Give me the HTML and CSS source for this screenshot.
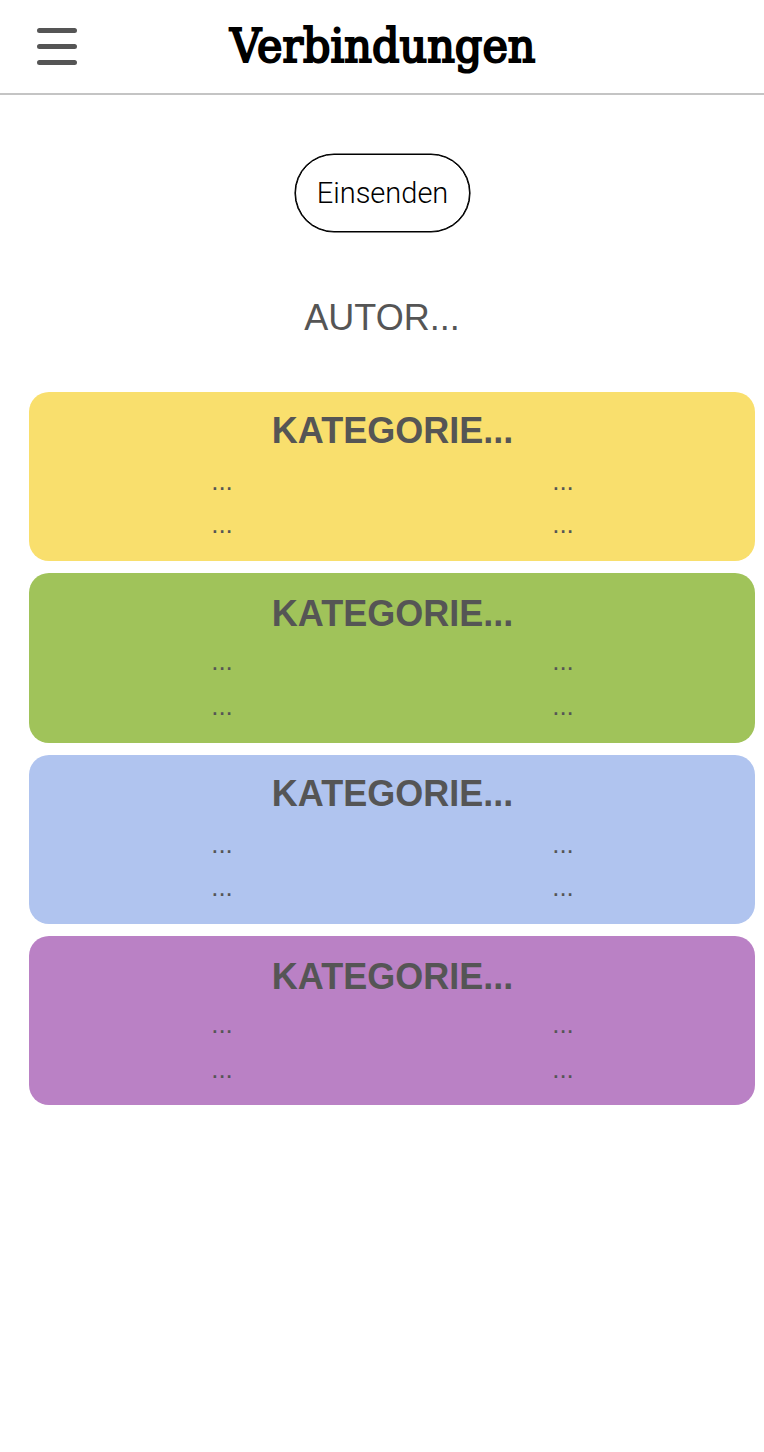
FILE: index.html
```html
<!DOCTYPE html>
<html lang="de"><head><meta charset="utf-8"><title>Verbindungen</title><link rel="stylesheet" href="styles.css"></head>
<body>
<header class="header">
<button class="menu" aria-label="Menü"><svg width="40" height="38" viewBox="0 0 40 38"><path d="M2.5 2.5h35M2.5 18.5h35M2.5 34.5h35" stroke="#555" stroke-width="5" stroke-linecap="round"/></svg></button>
<h1 class="title"><svg class="wordmark" width="340" height="90"><text x="20" y="62" textLength="305.5" lengthAdjust="spacingAndGlyphs">Verbindungen</text></svg></h1>
</header>
<main class="main">
<button class="submit">Einsenden</button>
<div class="author">AUTOR...</div>
<div class="cards">
<section class="card yellow"><h2 class="category">KATEGORIE...</h2><div class="words"><span>...</span><span>...</span><span>...</span><span>...</span></div></section>
<section class="card green low"><h2 class="category">KATEGORIE...</h2><div class="words"><span>...</span><span>...</span><span>...</span><span>...</span></div></section>
<section class="card blue"><h2 class="category">KATEGORIE...</h2><div class="words"><span>...</span><span>...</span><span>...</span><span>...</span></div></section>
<section class="card purple low"><h2 class="category">KATEGORIE...</h2><div class="words"><span>...</span><span>...</span><span>...</span><span>...</span></div></section>
</div>
</main>
</body></html>
```

FILE: styles.css
```css
* { box-sizing: border-box; }
body { margin: 0; background: #fff; font-family: "Liberation Sans", Arial, sans-serif; }
.header { display: grid; grid-template-columns: 210px 340px 1fr; align-items: start; height: 95px; border-bottom: 2px solid #c4c4c4; }
.menu { border: 0; background: none; padding: 28px 0 0 37px; text-align: left; display: block; }
.menu svg, .wordmark { display: block; }
.title { margin: 0; }
.wordmark text { font: 400 47px "DejaVu Serif", serif; stroke: #000; stroke-width: 2.2px; }
.main { padding: 59px 9px 0 29px; }
.submit { display: flex; justify-content: center; align-items: center; width: 175px; height: 78px; margin: 0 0 0 266px; padding: 0; border: 1px solid #000; box-shadow: 0 0 0 0.6px #000; border-radius: 40px; background: #fff; color: #000; font: 300 29px/36px Roboto, sans-serif; }
.author { margin: 61px 0 0 -20px; height: 50px; line-height: 50px; text-align: center; font-size: 36px; color: #555; }
.cards { display: grid; grid-template-rows: repeat(4, 169.3px); gap: 12.1px; margin-top: 49px; }
.card { border-radius: 20px; padding-top: 18px; color: #555; }
.category { margin: 0 0 0 1px; height: 42px; line-height: 42px; font-size: 36px; text-align: center; }
.words { display: grid; grid-template-columns: 341px 341px; grid-auto-rows: 43px; justify-content: center; margin-top: 8px; padding-left: 1px; text-align: center; font-size: 26px; line-height: 43px; }
.low { padding-top: 20px; }
.low .words { margin-top: 5px; grid-auto-rows: 45px; }
.yellow { background: #f9df6d; }
.green { background: #a0c35a; }
.blue { background: #b0c4ef; }
.purple { background: #ba81c5; }
```
